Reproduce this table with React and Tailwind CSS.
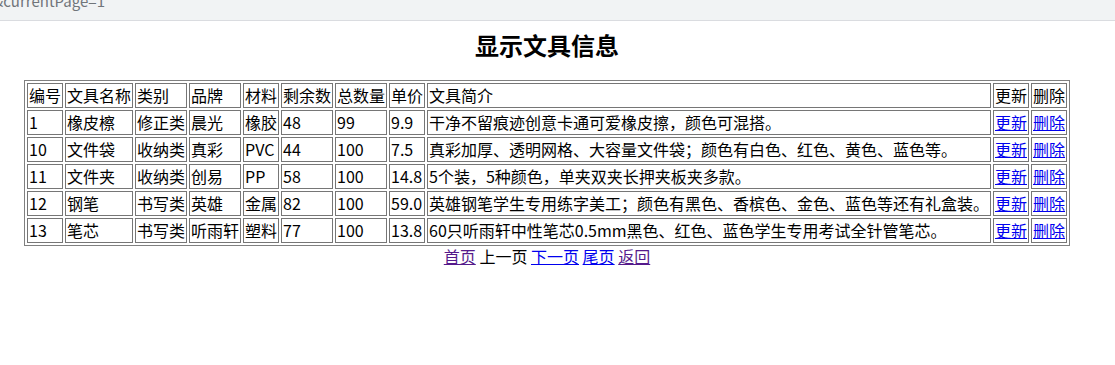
import React from 'react';

const rows = [
  { id: '1', name: '橡皮檫', type: '修正类', brand: '晨光', material: '橡胶', left: '48', total: '99', price: '9.9', desc: '干净不留痕迹创意卡通可爱橡皮擦，颜色可混搭。' },
  { id: '10', name: '文件袋', type: '收纳类', brand: '真彩', material: 'PVC', left: '44', total: '100', price: '7.5', desc: '真彩加厚、透明网格、大容量文件袋；颜色有白色、红色、黄色、蓝色等。' },
  { id: '11', name: '文件夹', type: '收纳类', brand: '创易', material: 'PP', left: '58', total: '100', price: '14.8', desc: '5个装，5种颜色，单夹双夹长押夹板夹多款。' },
  { id: '12', name: '钢笔', type: '书写类', brand: '英雄', material: '金属', left: '82', total: '100', price: '59.0', desc: '英雄钢笔学生专用练字美工；颜色有黑色、香槟色、金色、蓝色等还有礼盒装。' },
  { id: '13', name: '笔芯', type: '书写类', brand: '听雨轩', material: '塑料', left: '77', total: '100', price: '13.8', desc: '60只听雨轩中性笔芯0.5mm黑色、红色、蓝色学生专用考试全针管笔芯。' },
];

const headers = ['编号', '文具名称', '类别', '品牌', '材料', '剩余数', '总数量', '单价', '文具简介', '更新', '删除'];
const cell = 'border border-[#767676] p-px text-left font-normal whitespace-nowrap overflow-visible';

export default function App() {
  return (
    <div className="min-h-[365px] bg-white text-black text-[16px] leading-[21px]" style={{ fontFamily: '"Noto Sans CJK SC", "Noto Sans", sans-serif' }}>
      {/* browser address strip remnant */}
      <div className="h-[21px] bg-[#f1f3f4] border-b border-[#dadce0] overflow-hidden">
        <div className="-mt-[9px] -ml-[7px] text-[15px] leading-[20px] text-[#70757a]">&amp;currentPage=1</div>
      </div>

      <div className="w-[1094px] flex flex-col items-center">
        <h2 className="pt-[8px] mb-[19px] text-[24px] leading-[32px] font-bold">显示文具信息</h2>

        <table className="table-fixed w-[1046px] border-separate border-spacing-[2px] border border-[#808080]">
          <colgroup>
            <col className="w-[36px]" />
            <col className="w-[68px]" />
            <col className="w-[52px]" />
            <col className="w-[52px]" />
            <col className="w-[36px]" />
            <col className="w-[52px]" />
            <col className="w-[52px]" />
            <col className="w-[36px]" />
            <col className="w-[564px]" />
            <col className="w-[36px]" />
            <col className="w-[36px]" />
          </colgroup>
          <thead>
            <tr>
              {headers.map((h) => (
                <td key={h} className={cell}>{h}</td>
              ))}
            </tr>
          </thead>
          <tbody>
            {rows.map((r) => (
              <tr key={r.id}>
                <td className={cell}>{r.id}</td>
                <td className={cell}>{r.name}</td>
                <td className={cell}>{r.type}</td>
                <td className={cell}>{r.brand}</td>
                <td className={cell}>{r.material}</td>
                <td className={cell}>{r.left}</td>
                <td className={cell}>{r.total}</td>
                <td className={cell}>{r.price}</td>
                <td className={cell}>{r.desc}</td>
                <td className={cell}><a href="#" className="text-[#0000ee] underline">更新</a></td>
                <td className={cell}><a href="#" className="text-[#0000ee] underline">删除</a></td>
              </tr>
            ))}
          </tbody>
        </table>

        <div className="text-center">
          <a href="#" className="text-[#551a8b] underline">首页</a>{' '}
          <span>上一页</span>{' '}
          <a href="#" className="text-[#0000ee] underline">下一页</a>{' '}
          <a href="#" className="text-[#0000ee] underline">尾页</a>{' '}
          <a href="#" className="text-[#551a8b] underline">返回</a>
        </div>
      </div>
    </div>
  );
}
